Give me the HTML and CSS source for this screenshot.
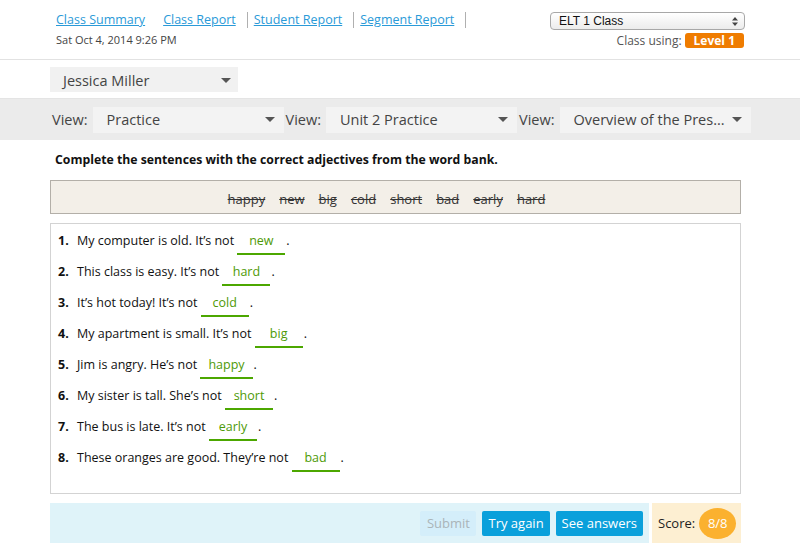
FILE: index.html
```html
<!DOCTYPE html>
<html>
<head>
<meta charset="utf-8">
<link rel="stylesheet" href="styles.css">
</head>
<body>
<header class="header">
  <div class="header-left">
    <nav class="nav">
      <a class="nav-link first" href="#">Class Summary</a>
      <a class="nav-link" href="#">Class Report</a>
      <a class="nav-link" href="#">Student Report</a>
      <a class="nav-link" href="#">Segment Report</a>
    </nav>
    <div class="date">Sat Oct 4, 2014 9:26 PM</div>
  </div>
  <div class="header-right">
    <div class="native-select">
      <span>ELT 1 Class</span>
      <svg class="updown" width="6" height="9" viewBox="0 0 6 9"><path d="M3 0 L6 3.5 H0 Z M0 5.5 H6 L3 9 Z" fill="#444"/></svg>
    </div>
    <div class="class-using">Class using: <span class="level">Level 1</span></div>
  </div>
</header>

<div class="student-row">
  <div class="gselect student">
    <span>Jessica Miller</span>
    <span class="caret"></span>
  </div>
</div>

<div class="view-bar">
  <span class="view-label">View:</span>
  <div class="gselect view"><span>Practice</span><span class="caret"></span></div>
  <span class="view-label">View:</span>
  <div class="gselect view"><span>Unit 2 Practice</span><span class="caret"></span></div>
  <span class="view-label">View:</span>
  <div class="gselect view"><span>Overview of the Pres...</span><span class="caret"></span></div>
</div>

<main class="content">
  <p class="instructions">Complete the sentences with the correct adjectives from the word bank.</p>
  <div class="word-bank">
    <s>happy</s><s>new</s><s>big</s><s>cold</s><s>short</s><s>bad</s><s>early</s><s>hard</s>
  </div>
  <ol class="questions">
    <li class="q"><span class="num">1.</span>My computer is old. It’s not <span class="answer">new</span>.</li>
    <li class="q"><span class="num">2.</span>This class is easy. It’s not <span class="answer">hard</span>.</li>
    <li class="q"><span class="num">3.</span>It’s hot today! It’s not <span class="answer">cold</span>.</li>
    <li class="q"><span class="num">4.</span>My apartment is small. It’s not <span class="answer">big</span>.</li>
    <li class="q"><span class="num">5.</span>Jim is angry. He’s not <span class="answer">happy</span>.</li>
    <li class="q"><span class="num">6.</span>My sister is tall. She’s not <span class="answer">short</span>.</li>
    <li class="q"><span class="num">7.</span>The bus is late. It’s not <span class="answer">early</span>.</li>
    <li class="q"><span class="num">8.</span>These oranges are good. They’re not <span class="answer">bad</span>.</li>
  </ol>
  <div class="footer-row">
    <div class="actions">
      <button class="btn disabled">Submit</button>
      <button class="btn">Try again</button>
      <button class="btn">See answers</button>
    </div>
    <div class="score">Score: <span class="score-badge">8/8</span></div>
  </div>
</main>
</body>
</html>
```

FILE: styles.css
```css
* { box-sizing: border-box; }
html, body { margin: 0; padding: 0; background: #fff; }
body {
  font-family: "Open Sans", "DejaVu Sans", sans-serif;
  color: #222;
  width: 800px;
}

.header {
  display: flex;
  justify-content: space-between;
  height: 60px;
  border-bottom: 1px solid #e2e2e2;
  padding: 0 55px 0 56px;
}
.nav {
  display: flex;
  margin-top: 12px;
  height: 16px;
}
.nav-link {
  font-size: 12.5px;
  line-height: 16px;
  color: #2a9ad8;
  text-decoration: underline;
  padding: 0 11px 0 6px;
  border-right: 1px solid #b0b0b0;
}
.nav-link.first { padding-left: 0; border-right-color: transparent; }
.date {
  font-size: 11px;
  color: #444;
  margin-top: 5px;
  line-height: 14px;
}

.header-right {
  display: flex;
  flex-direction: column;
  align-items: flex-end;
  padding-top: 12px;
}
.native-select {
  width: 195px;
  height: 18px;
  border: 1px solid #a8a8a8;
  border-radius: 4px;
  background: linear-gradient(#ffffff, #ececec);
  display: flex;
  align-items: center;
  justify-content: space-between;
  padding: 0 6px 0 8px;
  font-family: "Liberation Sans", Arial, sans-serif;
  font-size: 12px;
  color: #111;
}
.class-using {
  margin-top: 2px;
  font-size: 12px;
  color: #555;
  display: flex;
  align-items: center;
  gap: 3px;
  margin-right: 1px;
}
.level {
  display: inline-block;
  background: #ef7c00;
  color: #fff;
  font-weight: bold;
  font-size: 12px;
  line-height: 15px;
  padding: 0 9px;
  border-radius: 3px;
  min-width: 57px;
}

.gselect {
  display: flex;
  align-items: center;
  justify-content: space-between;
  background: #f1f1f1;
  color: #444;
  font-size: 14.5px;
}
.caret {
  width: 0; height: 0;
  border-left: 5px solid transparent;
  border-right: 5px solid transparent;
  border-top: 5px solid #555;
}
.student-row {
  height: 38px;
  padding: 7px 0 0 50px;
}
.gselect.student {
  width: 188px;
  height: 25px;
  padding: 1px 7px 0 13px;
}

.view-bar {
  height: 42px;
  background: #ebebeb;
  border-top: 1px solid #e4e4e4;
  display: flex;
  align-items: center;
  padding-left: 52px;
}
.view-label {
  font-size: 14.5px;
  color: #444;
  margin-right: 5px;
}
.gselect.view {
  width: 191px;
  height: 26px;
  background: #f3f3f3;
  padding: 0 9px 0 14px;
  margin-right: 2px;
}

.content {
  padding: 0 59px 0 50px;
}
.instructions {
  margin: 11px 0 0 5px;
  font-size: 12.25px;
  font-weight: bold;
  color: #111;
  line-height: 17px;
}
.word-bank {
  margin-top: 12px;
  height: 34px;
  background: #f3efe8;
  border: 1px solid #b3afa8;
  display: flex;
  justify-content: center;
  align-items: center;
  gap: 14px;
  font-size: 13px;
  color: #333;
  padding: 3px 18px 0 0;
}
.word-bank s { text-decoration: line-through; }

.questions {
  list-style: none;
  margin: 9px 0 0 0;
  padding: 5px 7px 0 7px;
  height: 271px;
  border: 1px solid #d3d3d3;
}
.q {
  height: 31px;
  font-size: 12.5px;
  color: #111;
  line-height: 18px;
  padding-top: 3px;
}
.num {
  display: inline-block;
  width: 19px;
  font-weight: bold;
}
.answer {
  display: inline-block;
  min-width: 48px;
  text-align: center;
  color: #4e9a06;
  border-bottom: 2px solid #4ca700;
  padding: 0 8px 3px;
  margin-right: 1px;
}

.footer-row {
  display: flex;
  margin-top: 9px;
  gap: 3px;
}
.actions {
  width: 599px;
  height: 40px;
  background: #dff3f9;
  display: flex;
  justify-content: flex-end;
  align-items: center;
  gap: 6px;
  padding-right: 6px;
}
.btn {
  font-family: "Open Sans", "DejaVu Sans", sans-serif;
  font-size: 13px;
  height: 25px;
  padding: 0 6px;
  border: none;
  border-radius: 2px;
  background: #0aa0db;
  color: #fff;
}
.btn.disabled {
  background: #d4eefa;
  color: #aab4b8;
  width: 56px;
}
.score {
  flex: 1;
  height: 40px;
  background: #fdefd2;
  display: flex;
  align-items: center;
  padding-left: 6px;
  font-size: 13px;
  color: #222;
  gap: 4px;
}
.score-badge {
  display: inline-flex;
  align-items: center;
  justify-content: center;
  width: 37px;
  height: 31px;
  border-radius: 50%;
  background: #fbb12f;
  color: #fff;
  font-size: 13px;
}
```
